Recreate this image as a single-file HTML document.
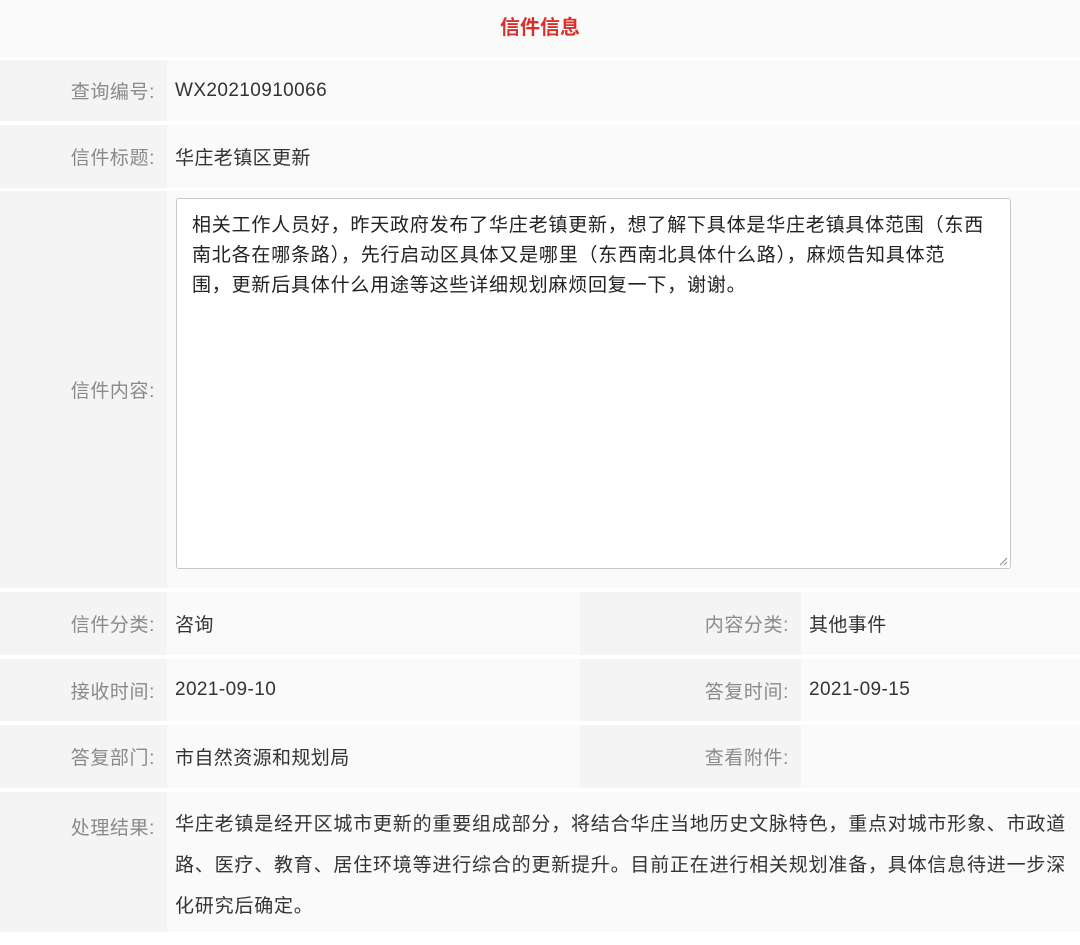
<!DOCTYPE html>
<html><head><meta charset="utf-8"><style>
body{margin:0;width:1080px;height:945px;background:#fff;font-family:"Liberation Sans","Noto Sans CJK SC",sans-serif;font-size:19px;position:relative;overflow:hidden}
.a{position:absolute;box-sizing:border-box}
.h{left:0;top:0;width:1080px;height:57px;background:#fafafa;color:#d9302a;font-weight:bold;text-align:center;line-height:57px;font-size:20px}
.l{background:#f4f4f4;color:#8a8a8a;text-align:right;padding-right:12px;display:flex;align-items:center;justify-content:flex-end;letter-spacing:0.6px}
.v{background:#fafafa;color:#333;padding-left:8px;display:flex;align-items:center;letter-spacing:0.4px}
</style></head><body>
<div class="a h">信件信息</div>
<div class="a l" style="left:0;top:60px;width:167px;height:61px">查询编号:</div>
<div class="a v" style="left:167px;top:60px;width:913px;height:61px">WX20210910066</div>
<div class="a l" style="left:0;top:125px;width:167px;height:63px">信件标题:</div>
<div class="a v" style="left:167px;top:125px;width:913px;height:63px">华庄老镇区更新</div>
<div class="a l" style="left:0;top:191px;width:167px;height:397px">信件内容:</div>
<div class="a v" style="left:167px;top:191px;width:913px;height:397px"></div>
<div class="a" style="left:176px;top:198px;width:835px;height:371px;background:#fff;border:1px solid #c8c8c8;border-radius:3px;padding:12px 10px 0 15px;line-height:30px;color:#222;letter-spacing:0.8px">相关工作人员好，昨天政府发布了华庄老镇更新，想了解下具体是华庄老镇具体范围（东西<br>南北各在哪条路），先行启动区具体又是哪里（东西南北具体什么路），麻烦告知具体范<br>围，更新后具体什么用途等这些详细规划麻烦回复一下，谢谢。
<svg style="position:absolute;right:2px;bottom:2px" width="10" height="10"><path d="M2 9L9 2M6 9L9 6" stroke="#888" stroke-width="1"/></svg></div>
<div class="a l" style="left:0;top:592px;width:167px;height:63px">信件分类:</div>
<div class="a v" style="left:167px;top:592px;width:413px;height:63px">咨询</div>
<div class="a l" style="left:580px;top:592px;width:221px;height:63px">内容分类:</div>
<div class="a v" style="left:801px;top:592px;width:279px;height:63px">其他事件</div>
<div class="a l" style="left:0;top:659px;width:167px;height:62px">接收时间:</div>
<div class="a v" style="left:167px;top:659px;width:413px;height:62px">2021-09-10</div>
<div class="a l" style="left:580px;top:659px;width:221px;height:62px">答复时间:</div>
<div class="a v" style="left:801px;top:659px;width:279px;height:62px">2021-09-15</div>
<div class="a l" style="left:0;top:725px;width:167px;height:63px">答复部门:</div>
<div class="a v" style="left:167px;top:725px;width:413px;height:63px">市自然资源和规划局</div>
<div class="a l" style="left:580px;top:725px;width:221px;height:63px">查看附件:</div>
<div class="a v" style="left:801px;top:725px;width:279px;height:63px"></div>
<div class="a l" style="left:0;top:792px;width:167px;height:140px;align-items:flex-start;padding-top:21px">处理结果:</div>
<div class="a v" style="left:167px;top:792px;width:913px;height:140px;align-items:flex-start;padding-top:12px;line-height:41px;padding-right:6px;letter-spacing:0.8px;display:block">华庄老镇是经开区城市更新的重要组成部分，将结合华庄当地历史文脉特色，重点对城市形象、市政道<br>路、医疗、教育、居住环境等进行综合的更新提升。目前正在进行相关规划准备，具体信息待进一步深<br>化研究后确定。</div>
</body></html>
